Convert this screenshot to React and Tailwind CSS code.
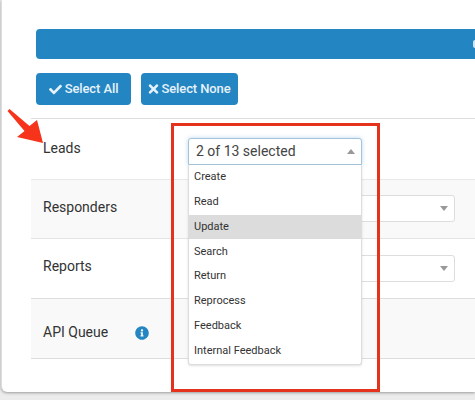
import { FaCheck, FaTimes, FaInfoCircle } from "react-icons/fa";

const options = ["Create", "Read", "Update", "Search", "Return", "Reprocess", "Feedback", "Internal Feedback"];

function Caret({ up }) {
  return (
    <svg className="h-[5px] w-[8px] text-[#999]" viewBox="0 0 10 6" preserveAspectRatio="none">
      <path d={up ? "M5 0 L10 6 L0 6 Z" : "M0 0 L10 0 L5 6 Z"} fill="currentColor" />
    </svg>
  );
}

function ClosedSelect() {
  return (
    <div className="-mt-[1px] flex h-[27px] w-[267px] items-center justify-end rounded-[3px] border border-[#ddd] bg-white pr-[6px]">
      <Caret />
    </div>
  );
}

function Dropdown() {
  return (
    <div className="absolute left-[188px] top-[138px] w-[174px]">
      <div className="flex h-[27px] items-center justify-between rounded-t-[3px] border border-[#a3c4dc] bg-white pl-[7px] pr-[6px] text-[14px] text-[#444] shadow-[0_0_4px_rgba(100,170,220,0.45)]">
        <span>2 of 13 selected</span>
        <Caret up />
      </div>
      <ul className="rounded-b-[3px] border border-t-0 border-[#ddd] bg-white pb-[1px] shadow-sm">
        {options.map((o) => (
          <li
            key={o}
            className={`flex h-[24.8px] items-center pl-[5px] text-[11px] text-[#333] ${o === "Update" ? "bg-[#dcdcdc]" : ""}`}
          >
            {o}
          </li>
        ))}
      </ul>
    </div>
  );
}

function App() {
  return (
    <div className="relative h-[400px] w-[475px] overflow-hidden bg-[#ececec] font-['Roboto',sans-serif]">
      <div className="ml-[1px] h-[392px] rounded-bl-[6px] border-l border-[#ddd] bg-white pl-[29px] pt-[29px] shadow-[0_1px_3px_rgba(0,0,0,0.35)]">
        <div className="ml-[5px] flex h-[30px] items-center justify-end overflow-hidden rounded-l-[4px] bg-[#2385c2]">
          <span className="h-[8px] w-[2px] rounded-l-full bg-[#cfe3f0]" />
        </div>
        <div className="ml-[5px] mt-[14px] flex gap-[10px]">
          <button className="flex h-[32px] w-[95px] items-center justify-center gap-[3px] rounded-[4px] bg-[#2385c2] text-[13px] font-medium tracking-[-0.1px] text-[#e6f2f9]">
            <FaCheck className="h-[13px] w-[13px]" />
            Select All
          </button>
          <button className="flex h-[32px] w-[97px] items-center justify-center gap-[2px] rounded-[4px] bg-[#2385c2] text-[13px] font-medium tracking-[-0.1px] text-[#e6f2f9]">
            <FaTimes className="h-[14px] w-[11px]" />
            Select None
          </button>
        </div>
        <div className="mt-[13px] text-[14px] text-[#333]">
          <div className="flex h-[61px] items-center border-t border-[#ddd] pl-[12px]">
            <span className="-mt-[2px]">Leads</span>
          </div>
          <div className="flex h-[59px] items-center border-t border-[#e8e8e8] bg-[#f9f9f9] pl-[12px]">
            <span className="-mt-[3px] w-[145px]">Responders</span>
            <ClosedSelect />
          </div>
          <div className="flex h-[60px] items-center border-t border-[#e4e4e4] pl-[12px]">
            <span className="-mt-[4px] w-[145px]">Reports</span>
            <ClosedSelect />
          </div>
          <div className="flex h-[61px] items-center border-y border-[#ddd] bg-[#f9f9f9] pl-[12px]">
            <span className="mt-[8px] w-[92px]">API Queue</span>
            <FaInfoCircle className="mt-[8px] h-[14px] w-[14px] text-[#2385c2]" />
          </div>
        </div>
      </div>

      <Dropdown />

      {/* annotations drawn on top of the screenshot */}
      <div className="absolute left-[171px] top-[123px] h-[269px] w-[209px] border-[3px] border-[#e4321d]" />
      <svg className="absolute left-0 top-[100px] h-[50px] w-[50px]" viewBox="0 0 50 50">
        <path d="M7.5 11 L9.5 9 L29.5 26 L37 20 L43 43 L17 37 L24.5 31 Z" fill="#f5341b" />
      </svg>
    </div>
  );
}

export default App;
